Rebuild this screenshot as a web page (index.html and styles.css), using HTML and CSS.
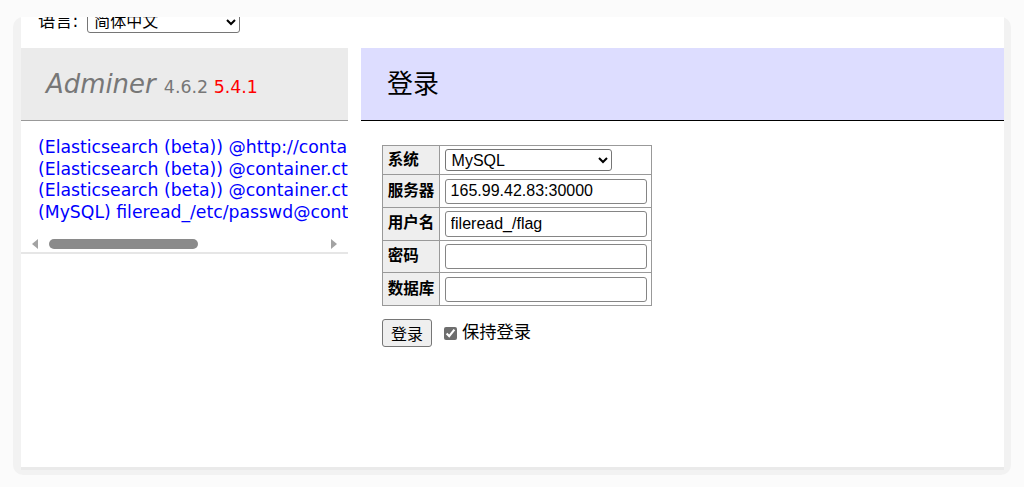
FILE: index.html
```html
<!DOCTYPE html>
<html lang="zh-CN">

<head>
  <meta charset="UTF-8">
  <meta name="viewport" content="width=device-width, initial-scale=1.0">
  <title>登录 - Adminer</title>
  <link rel="stylesheet" href="styles.css">
</head>

<body>
  <div class="frame">
    <div class="viewport">
      <div class="page">
        <form class="lang">
          语言: <select class="lang-select">
            <option>简体中文</option>
          </select>
        </form>

        <div class="layout">
          <div class="menu">
            <h1>
              <a class="brand" href="#">Adminer</a>
              <span class="version">4.6.2 <a class="version-new" href="#">5.4.1</a></span>
            </h1>
            <div class="logins">
              <a href="#">(Elasticsearch (beta)) @http://container.ctfhub.local:9200</a>
              <a href="#">(Elasticsearch (beta)) @container.ctfhub.local:9200</a>
              <a href="#">(Elasticsearch (beta)) @container.ctfhub.local:9201</a>
              <a href="#">(MySQL) fileread_/etc/passwd@container.ctfhub.local</a>
            </div>
            <div class="hscroll">
              <span class="arrow left"></span>
              <span class="thumb"></span>
              <span class="track"></span>
              <span class="arrow right"></span>
            </div>
          </div>

          <div class="content">
            <h2>登录</h2>
            <form>
              <table>
                <tr>
                  <th>系统</th>
                  <td>
                    <select class="field field-select">
                      <option>MySQL</option>
                    </select>
                  </td>
                </tr>
                <tr>
                  <th>服务器</th>
                  <td><input class="field" type="text" value="165.99.42.83:30000"></td>
                </tr>
                <tr>
                  <th>用户名</th>
                  <td><input class="field" type="text" value="fileread_/flag"></td>
                </tr>
                <tr>
                  <th>密码</th>
                  <td><input class="field" type="password"></td>
                </tr>
                <tr>
                  <th>数据库</th>
                  <td><input class="field" type="text"></td>
                </tr>
              </table>
              <p class="actions">
                <button type="button" class="btn">登录</button>
                <label class="remember"><input type="checkbox" checked>保持登录</label>
              </p>
            </form>
          </div>
        </div>
      </div>
    </div>
  </div>
</body>

</html>
```

FILE: styles.css
```css
:root {
  --font-main: "DejaVu Sans", "Noto Sans CJK SC", sans-serif;
  --font-control: "Liberation Sans", "Noto Sans CJK SC", sans-serif;
  --color-muted: #777;
  --color-border: #999;
  --color-head: #ebebeb;
  --color-title: #ddf;
}

html,
body {
  margin: 0;
}

body {
  padding-top: 17px;
  background: #fbfbfb;
  color: #000;
  font: 17.28px/1.25 var(--font-main);
}

/* window frame around the scrolled page */
.frame {
  margin: 0 13px;
  padding: 0 7px 8px 8px;
  background: #f2f2f2;
  border-radius: 10px;
}

.viewport {
  height: 450px;
  overflow: hidden;
  background: #fff;
  box-shadow: 0 3px 0 #eaeaea;
}

/* page is scrolled down a little */
.page {
  margin-top: -16px;
}

.lang {
  display: flex;
  align-items: center;
  height: 31px;
  padding: 5px 17px 11px;
  margin: 0;
}

.lang-select {
  width: 153px;
  height: 22px;
  margin-left: 9px;
  padding: 0 2px;
  font: 16px var(--font-control);
  border: 1px solid #767676;
  border-radius: 3px;
  background: #fff;
}

.layout {
  display: flex;
  align-items: flex-start;
  gap: 13px;
}

.menu {
  width: 327px;
  flex-shrink: 0;
}

.content {
  flex: 1;
  min-width: 0;
}

h1,
h2 {
  margin: 0;
  height: 32px;
  padding: 20px 26px 20px 25px;
  font-size: 25.92px;
  line-height: 32px;
  font-weight: normal;
  white-space: nowrap;
}

h1 {
  color: var(--color-muted);
  background: var(--color-head);
  border-bottom: 1px solid var(--color-border);

  & .brand {
    color: var(--color-muted);
    font-style: italic;
    text-decoration: none;
  }
}

.version {
  font-size: 17.4px;
  line-height: 1;
  color: var(--color-muted);
}

.version-new {
  color: red;
  text-decoration: none;
}

h2 {
  padding-left: 26px;
  color: #000;
  background: var(--color-title);
  border-bottom: 1px solid #000;
}

.logins {
  padding: 16px 17px 12px;
  overflow: hidden;
  white-space: nowrap;
  line-height: 21.6px;

  & a {
    display: block;
    color: blue;
    text-decoration: none;
  }
}

/* horizontal scrollbar of the logins list */
.hscroll {
  display: flex;
  align-items: center;
  height: 17px;
  padding: 0 11px;
  border-bottom: 2px solid #e6e6e6;

  & .arrow {
    width: 0;
    height: 0;
    border-top: 5px solid transparent;
    border-bottom: 5px solid transparent;
  }

  & .left {
    border-right: 6px solid #a3a3a3;
  }

  & .right {
    border-left: 6px solid #a3a3a3;
  }

  & .thumb {
    width: 149px;
    height: 10px;
    margin-left: 11px;
    border-radius: 5px;
    background: #8a8a8a;
  }

  & .track {
    flex: 1;
  }
}

table {
  margin: 24px 0 0 21px;
  border-collapse: collapse;
  font-size: 15.55px;
}

th,
td {
  border: 1px solid var(--color-border);
  padding: 3.2px 4.67px;
}

th {
  background: #eee;
  text-align: left;
  font-weight: bold;
  line-height: 19px;
  white-space: nowrap;
}

.field {
  display: block;
  box-sizing: border-box;
  width: 202px;
  height: 25.3px;
  padding: 0 5px;
  font: 16px var(--font-control);
  color: #000;
  background: #fff;
  border: 1px solid #858585;
  border-radius: 3px;
}

.field-select {
  width: 167px;
  height: 22px;
  padding: 0 2px;
  border-color: #767676;
}

.actions {
  display: flex;
  align-items: center;
  margin: 13px 0 0 21px;
}

.btn {
  height: 28px;
  padding: 0 8px;
  font: 16px var(--font-control);
  color: #000;
  background: #efefef;
  border: 1px solid #767676;
  border-radius: 3px;
}

.remember {
  display: flex;
  align-items: center;
  margin-left: 12px;

  & input {
    width: 13px;
    height: 13px;
    margin: 0 5px 0 0;
    accent-color: #6e6e6e;
  }
}
```
